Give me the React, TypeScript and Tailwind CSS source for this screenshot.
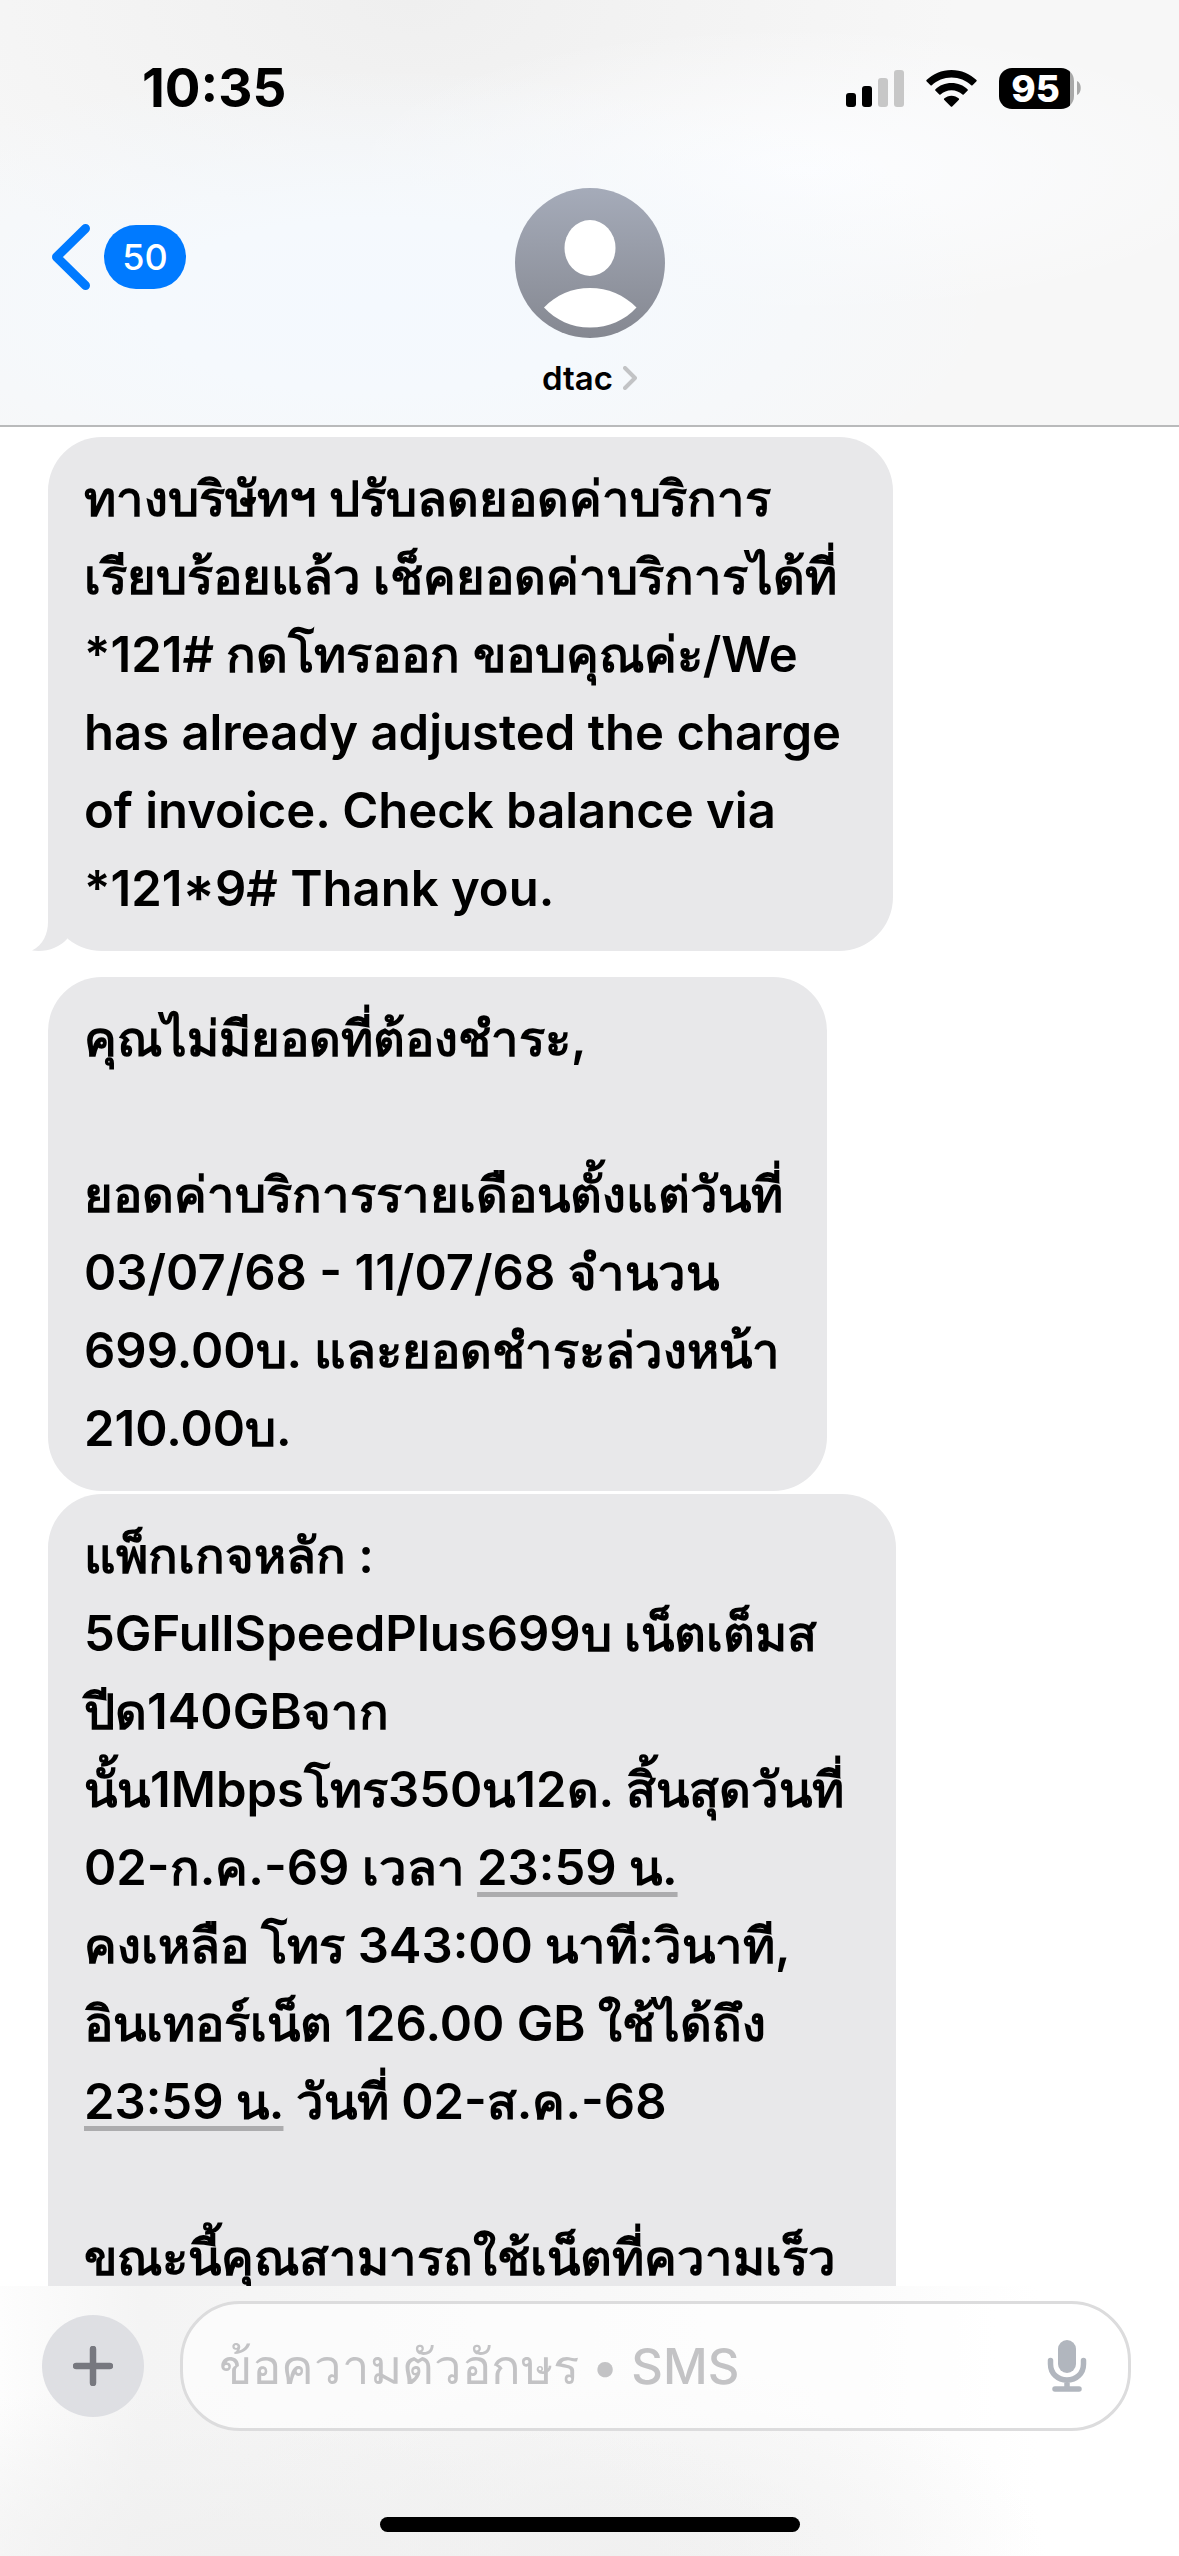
import { Fragment } from "react"

type Part = string | { time: string }

interface Message {
  id: number
  className: string
  tail?: boolean
  lines: Part[][]
}

const messages: Message[] = [
  {
    id: 1,
    className: "mb-[26px] w-[845px] rounded-[54px] py-[23px]",
    tail: true,
    lines: [
      ["ทางบริษัทฯ ปรับลดยอดค่าบริการ"],
      ["เรียบร้อยแล้ว เช็คยอดค่าบริการได้ที่"],
      ["*121# กดโทรออก ขอบคุณค่ะ/We"],
      ["has already adjusted the charge"],
      ["of invoice. Check balance via"],
      ["*121*9# Thank you."],
    ],
  },
  {
    id: 2,
    className: "mb-[3px] w-[779px] rounded-[54px] py-[23px]",
    lines: [
      ["คุณไม่มียอดที่ต้องชำระ,"],
      [],
      ["ยอดค่าบริการรายเดือนตั้งแต่วันที่"],
      ["03/07/68 - 11/07/68 จำนวน"],
      ["699.00บ. และยอดชำระล่วงหน้า"],
      ["210.00บ."],
    ],
  },
  {
    id: 3,
    className: "w-[848px] rounded-[54px] pt-[23px] pb-24",
    lines: [
      ["แพ็กเกจหลัก :"],
      ["5GFullSpeedPlus699บ เน็ตเต็มส"],
      ["ปีด140GBจาก"],
      ["นั้น1Mbpsโทร350น12ด. สิ้นสุดวันที่"],
      ["02-ก.ค.-69 เวลา ", { time: "23:59 น." }],
      ["คงเหลือ โทร 343:00 นาที:วินาที,"],
      ["อินเทอร์เน็ต 126.00 GB ใช้ได้ถึง"],
      [{ time: "23:59 น." }, " วันที่ 02-ส.ค.-68"],
      [],
      ["ขณะนี้คุณสามารถใช้เน็ตที่ความเร็ว"],
    ],
  },
]

function StatusBar() {
  return (
    <div className="flex items-center justify-between pt-[57px] pr-[98px] pl-[142px]">
      <span className="text-[53px] leading-[62px] font-bold">10:35</span>
      <div className="flex items-center">
        <svg width="58" height="37" viewBox="0 0 58 37" aria-hidden="true">
          <rect x="0" y="23" width="10" height="14" rx="3" />
          <rect x="16" y="16" width="10" height="21" rx="3" />
          <rect x="32" y="8" width="10" height="29" rx="3" fill="#c7c7c7" />
          <rect x="48" y="0" width="10" height="37" rx="3" fill="#c7c7c7" />
        </svg>
        <svg className="ml-[22px]" width="51" height="37" viewBox="0 0 51 37" aria-hidden="true">
          <path d="M25.500 0C35.300 0 44.200 3.900 50.500 10.100Q51 10.700 50.500 11.300L46.500 15.300Q45.800 15.800 45.200 15.300C40 10.400 33.100 7.500 25.500 7.500S11 10.400 5.800 15.300Q5.200 15.800 4.500 15.300L.5 11.300Q0 10.700.5 10.100C6.800 3.900 15.700 0 25.500 0Z" />
          <path d="M25.500 13C31.800 13 37.500 15.400 41.700 19.400Q42.200 20 41.700 20.600L37.700 24.500Q37.100 25 36.500 24.500C33.600 21.900 29.700 20.300 25.500 20.300S17.400 21.900 14.500 24.500Q13.900 25 13.300 24.500L9.300 20.600Q8.800 20 9.300 19.400C13.500 15.400 19.200 13 25.500 13Z" />
          <path d="M25.500 25.800C28.300 25.800 30.900 26.900 32.900 28.600Q33.400 29.200 32.900 29.800L26.200 36.500Q25.500 37 24.800 36.500L18.100 29.800Q17.600 29.200 18.100 28.600C20.100 26.900 22.700 25.800 25.500 25.800Z" />
        </svg>
        <div className="ml-[22px] h-[41px] w-[75px] rounded-[13px] bg-[linear-gradient(to_right,#000_95%,#a8a8a8_95%)] pr-0.5 text-center text-[37px] leading-[41px] font-extrabold text-white">
          95
        </div>
        <svg className="ml-[3px]" width="4" height="14" viewBox="0 0 4 14" aria-hidden="true">
          <path d="M0 0C5 2 5 12 0 14Z" fill="#a8a8a8" />
        </svg>
      </div>
    </div>
  )
}

function Header() {
  return (
    <header className="h-[427px] shrink-0 border-b-2 border-[#b9babb] bg-[#f7f7f7] bg-[radial-gradient(ellipse_at_32%_72%,#f4f9fe_0%,#f5f9fd_20%,transparent_55%),radial-gradient(ellipse_at_68%_40%,#fcfdff_0%,transparent_40%),radial-gradient(ellipse_at_35%_0%,#efefef_0%,transparent_50%)]">
      <StatusBar />
      {/* Back, contact and an empty column for balance */}
      <div className="mt-[69px] grid grid-cols-3">
        <div className="pt-9 pl-[52px]">
          <button className="flex items-center gap-3.5" aria-label="กลับ">
            <svg width="38" height="66" viewBox="0 0 38 66" fill="none" aria-hidden="true">
              <path d="M33.500 4.500L4.500 33L33.500 61.500" stroke="#007aff" strokeWidth="9" strokeLinecap="round" strokeLinejoin="round" />
            </svg>
            <span className="flex h-16 w-[82px] items-center justify-center rounded-full bg-[#007aff] text-[36px] font-medium text-white">
              50
            </span>
          </button>
        </div>
        <button className="flex flex-col items-center">
          <svg width="150" height="150" viewBox="0 0 150 150" aria-hidden="true">
            <defs>
              <linearGradient id="avatar" x1="0" y1="0" x2="0" y2="1">
                <stop offset="0" stopColor="#a5abb9" />
                <stop offset="1" stopColor="#858891" />
              </linearGradient>
            </defs>
            <circle cx="75" cy="75" r="75" fill="url(#avatar)" />
            <ellipse cx="75" cy="60" rx="25.500" ry="28" fill="#fff" />
            <path d="M29 119.500C41 107 57 100 75 100S109 107 121.500 119.500C110 132 94 139.500 75 139.500S41 132 29 119.500Z" fill="#fff" />
          </svg>
          <span className="mt-5 flex items-center gap-2.5 text-[33px] leading-[40px] font-semibold">
            dtac
            <svg width="14" height="24" viewBox="0 0 14 24" fill="none" aria-hidden="true">
              <path d="M2 2L12 12L2 22" stroke="#c2c3c5" strokeWidth="4" strokeLinecap="round" strokeLinejoin="round" />
            </svg>
          </span>
        </button>
      </div>
    </header>
  )
}

function Bubble({ message }: { message: Message }) {
  return (
    <div className={`relative shrink-0 bg-[#e8e8ea] pl-9 ${message.className}`}>
      {message.tail && (
        <svg className="absolute bottom-0 -left-4" width="40" height="60" viewBox="0 0 40 60" aria-hidden="true">
          <path d="M16 0V31C16 43 11 54 0 59.500C14 61.500 27 57 35 48L38 0Z" fill="#e8e8ea" />
        </svg>
      )}
      {message.lines.map((line, i) => (
        <p key={i} className="relative h-[78px] text-[49px] leading-[78px] font-semibold whitespace-pre">
          {line.map((part, j) =>
            typeof part === "string" ? (
              <Fragment key={j}>{part}</Fragment>
            ) : (
              <a key={j} href="#" className="underline decoration-[#acacae] decoration-[5px] underline-offset-[7px] [text-decoration-skip-ink:none]">
                {part.time}
              </a>
            ),
          )}
        </p>
      ))}
    </div>
  )
}

function Composer() {
  return (
    <footer className="h-[270px] shrink-0 bg-white bg-[radial-gradient(ellipse_at_20%_100%,#f0f0f0_0%,transparent_45%),radial-gradient(ellipse_at_52%_100%,#f0f0f0_0%,transparent_50%),linear-gradient(to_right,#fdfdfd_0%,#f4f4f4_12%,#f8f8f8_50%,#fafafa_70%,#fff_88%)] pt-[15px]">
      <div className="flex items-center gap-9 pr-12 pl-[42px]">
        <button className="flex size-[102px] shrink-0 items-center justify-center rounded-full bg-[#dedfe3]" aria-label="เพิ่ม">
          <svg width="40" height="40" viewBox="0 0 40 40" aria-hidden="true">
            <path d="M20 3V37M3 20H37" stroke="#77787f" strokeWidth="6.500" strokeLinecap="round" />
          </svg>
        </button>
        <div className="flex h-[130px] flex-1 items-center rounded-[60px] border-3 border-[#dcdcdd] bg-white/60 pr-[41px] pl-9">
          <input
            type="text"
            aria-label="ข้อความ"
            placeholder="ข้อความตัวอักษร • SMS"
            className="h-20 min-w-0 flex-1 bg-transparent text-[49px] font-medium outline-none placeholder:text-[#c3c3c5]"
          />
          <button aria-label="ป้อนตามคำบอก">
            <svg width="40" height="52" viewBox="0 0 40 52" aria-hidden="true">
              <rect x="11" y="0" width="18" height="33" rx="9" fill="#b1b6be" />
              <path d="M3.500 20.500V24C3.500 33.500 10.500 40 20 40S36.500 33.500 36.500 24V20.500M20 40V49M8 49H32" fill="none" stroke="#b1b6be" strokeWidth="5.500" strokeLinecap="round" />
            </svg>
          </button>
        </div>
      </div>
      <div className="mx-auto mt-[86px] h-[15px] w-[420px] rounded-full bg-black" />
    </footer>
  )
}

export default function App() {
  return (
    <div className="flex h-screen flex-col bg-white font-['Inter','Noto_Sans',sans-serif] text-black">
      <Header />
      <main className="flex min-h-0 flex-1 flex-col overflow-hidden pt-2.5 pl-12">
        {messages.map((message) => (
          <Bubble key={message.id} message={message} />
        ))}
      </main>
      <Composer />
    </div>
  )
}
